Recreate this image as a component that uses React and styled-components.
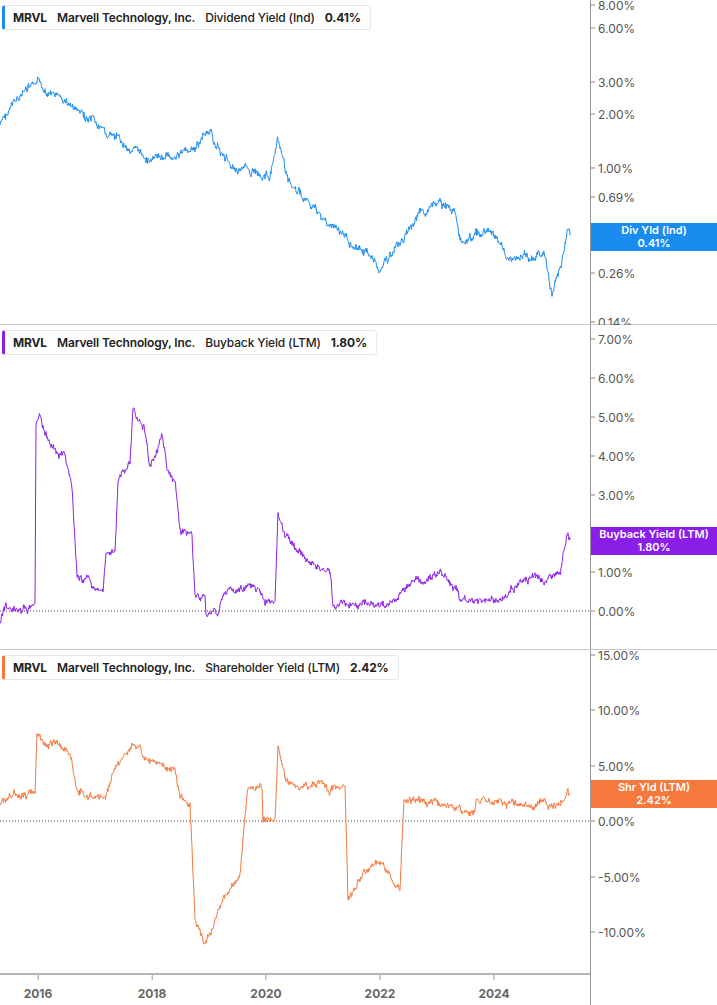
import React from "react";
import styled, { createGlobalStyle } from "styled-components";

const Global = createGlobalStyle`
  body { margin: 0; background: #fff; font-family: Inter, "Noto Sans", sans-serif; }
`;

const Page = styled.div`width: 717px; height: 1005px; display: flex; flex-direction: column; overflow: hidden;`;
const PanelRow = styled.div`display: flex; height: ${p => p.h}px; border-bottom: ${p => p.last ? "none" : "1px solid #c8c8c8"}; box-sizing: border-box;`;
const Plot = styled.div`position: relative; width: 590px; height: 100%;`;
const Axis = styled.div`position: relative; flex: 1; border-left: 1px solid #999; background: #fff;`;
const Tick = styled.div`
  position: absolute; left: 0; transform: translateY(-50%);
  font-size: 12px; color: #555; display: flex; align-items: center; gap: 3px;
  &::before { content: ""; width: 4px; height: 1px; background: #888; }
`;
const Tag = styled.div`
  position: absolute; left: 0; right: 0; height: 28px; transform: translateY(-50%); z-index: 2;
  background: ${p => p.c}; color: #fff; font-size: 11px; font-weight: 600;
  display: flex; flex-direction: column; align-items: center; justify-content: center; line-height: 13px;
`;
const Legend = styled.div`
  position: absolute; left: 2px; top: 5px; height: 25px; box-sizing: border-box;
  display: flex; align-items: center; gap: 10px; padding: 0 9px 0 8px;
  background: #fff; border: 1px solid #e8e8e8; border-left: 3px solid ${p => p.c}; border-radius: 3px;
  font-size: 12px; letter-spacing: -0.15px; color: #222; white-space: nowrap;
`;
const B = styled.span`font-weight: 700;`;
const Sb = styled.span`font-weight: 600;`;
const M = styled.span`font-weight: 500;`;
const Bottom = styled.div`display: flex; height: 32px;`;
const BottomPlot = styled.div`position: relative; width: 590px; border-top: 2px solid #b5b5b5;`;
const Year = styled.div`
  position: absolute; top: 0; transform: translateX(-50%); font-size: 12px; font-weight: 700; color: #666;
  display: flex; flex-direction: column; align-items: center; gap: 6px;
  &::before { content: ""; width: 1px; height: 5px; background: #999; }
`;
const BottomAxis = styled.div`flex: 1; border-left: 1px solid #999;`;

function series(kp, seed, amp) {
  let s = seed;
  const rnd = () => { s = (s * 9301 + 49297) % 233280; return s / 233280 - 0.5; };
  const pts = [];
  let w = 0;
  for (let i = 0; i < kp.length - 1; i++) {
    const [x0, y0] = kp[i], [x1, y1] = kp[i + 1];
    const n = Math.max(1, Math.round((x1 - x0) * 2));
    for (let j = 0; j < n; j++) {
      const t = j / n;
      w = w * 0.85 + rnd() * amp * 0.6;
      pts.push([x0 + (x1 - x0) * t, y0 + (y1 - y0) * t + w + rnd() * amp * 0.6]);
    }
  }
  pts.push(kp[kp.length - 1]);
  return pts.map(p => p[0].toFixed(1) + "," + p[1].toFixed(1)).join(" ");
}

const P1 = [[0,125],[20,95],[38,85],[70,105],[100,130],[150,160],[195,150],[207,130],[230,165],[270,175],[278,145],[290,185],[330,225],[375,260],[380,270],[420,215],[440,205],[455,210],[460,240],[490,230],[510,260],[545,255],[552,295],[562,260],[568,228],[570,235]];
const P2 = [[0,622],[4,609],[35,608],[36,430],[40,415],[50,445],[65,455],[72,490],[77,577],[90,580],[92,590],[103,590],[106,550],[115,550],[118,480],[130,460],[133,410],[145,430],[150,470],[162,435],[167,470],[175,480],[180,530],[192,535],[195,595],[205,595],[206,612],[218,612],[222,595],[235,588],[260,590],[265,598],[275,598],[278,510],[285,535],[300,555],[310,565],[330,573],[333,605],[390,603],[410,583],[440,572],[455,590],[460,600],[500,600],[510,590],[530,578],[545,580],[560,575],[568,530],[570,540]].map(([x,y])=>[x,y-325]);
const P3 = [[0,803],[30,790],[35,792],[37,735],[42,740],[55,745],[70,750],[77,790],[100,800],[105,795],[115,765],[135,745],[150,760],[175,770],[180,800],[190,805],[195,915],[205,945],[220,905],[240,875],[245,820],[248,788],[262,788],[263,821],[275,821],[278,750],[285,775],[300,790],[320,778],[330,790],[345,790],[348,900],[360,880],[380,860],[400,890],[404,800],[420,800],[460,805],[461,815],[475,815],[476,800],[510,805],[540,807],[560,802],[568,790],[570,795]].map(([x,y])=>[x,y-650]);

function Panel({ h, last, color, metric, value, kp, seed, amp, ticks, tag, zero }) {
  return (
    <PanelRow h={h} last={last}>
      <Plot>
        <svg width="590" height={h} style={{ position: "absolute", left: 0, top: 0 }}>
          {zero != null && <line x1="0" x2="590" y1={zero} y2={zero} stroke="#444" strokeWidth="1" strokeDasharray="1,2" />}
          <polyline points={series(kp, seed, amp)} fill="none" stroke={color} strokeWidth="1" />
        </svg>
        <Legend c={color}>
          <B>MRVL</B><Sb>Marvell Technology, Inc.</Sb><M>{metric}</M><B>{value}</B>
        </Legend>
      </Plot>
      <Axis>
        {ticks.map(([l, y]) => <Tick key={l} style={{ top: y }}>{l}</Tick>)}
        <Tag c={color} style={{ top: tag[1] }}><span>{tag[0]}</span><span>{value}</span></Tag>
      </Axis>
    </PanelRow>
  );
}

export default function App() {
  return (
    <Page>
      <Global />
      <Panel h={325} color="#1a8cf0" metric="Dividend Yield (Ind)" value="0.41%" kp={P1} seed={7} amp={8}
        ticks={[["8.00%",5],["6.00%",28],["3.00%",82],["2.00%",114],["1.00%",168],["0.69%",197],["0.26%",273],["0.14%",322]]}
        tag={["Div Yld (Ind)",237]} />
      <Panel h={325} color="#8a1ee6" metric="Buyback Yield (LTM)" value="1.80%" kp={P2} seed={13} amp={7} zero={286}
        ticks={[["7.00%",14],["6.00%",53],["5.00%",92],["4.00%",131],["3.00%",170],["2.00%",209],["1.00%",247],["0.00%",286]]}
        tag={["Buyback Yield (LTM)",216]} />
      <Panel h={323} last color="#f5783c" metric="Shareholder Yield (LTM)" value="2.42%" kp={P3} seed={29} amp={7} zero={171}
        ticks={[["15.00%",5],["10.00%",60],["5.00%",116],["0.00%",171],["-5.00%",227],["-10.00%",282]]}
        tag={["Shr Yld (LTM)",144]} />
      <Bottom>
        <BottomPlot>
          {[["2016",38],["2018",152],["2020",266],["2022",380],["2024",494]].map(([y, x]) => <Year key={y} style={{ left: x }}>{y}</Year>)}
        </BottomPlot>
        <BottomAxis />
      </Bottom>
    </Page>
  );
}
